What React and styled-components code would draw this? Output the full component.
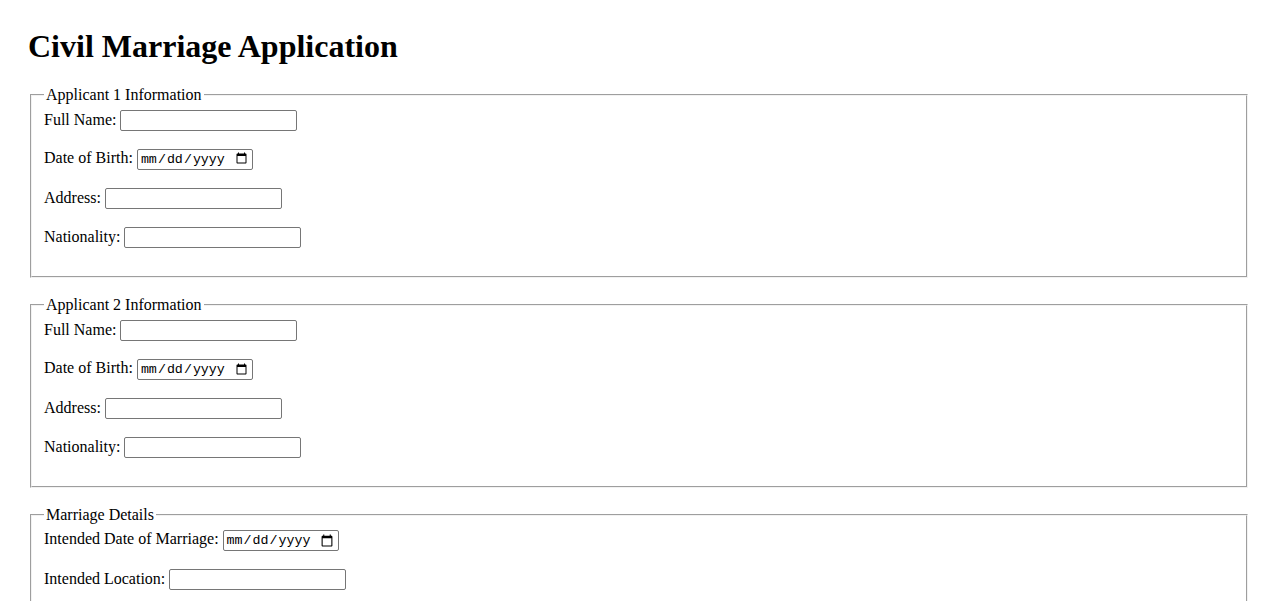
import React from "react";
import styled, { createGlobalStyle } from "styled-components";

const GlobalStyle = createGlobalStyle`
	body {
		margin: 0;
		background: #ffffff;
		color: #000000;
		font-family: "Liberation Serif", "Times New Roman", serif;
		font-size: 16px;
	}
`;

const Page = styled.div`
	padding: 28px;
`;

const Title = styled.h1`
	font-size: 32px;
	font-weight: bold;
	margin: 0 0 21px;
`;

const Section = styled.fieldset`
	margin: 0 2px 18.5px;
	padding: 0.35em 0.75em 0.625em;
	border: 2px groove rgb(242, 242, 242);
`;

const Legend = styled.legend`
	padding: 0 2px;
`;

const Row = styled.div`
	min-height: 24px;
	margin-bottom: 15px;
`;

const Input = styled.input`
	font-family: "Liberation Sans", Arial, sans-serif;
	font-size: 13.333px;
	padding: 1px 2px;
	border: 1px solid #767676;
	border-radius: 2px;
	width: 171px;
	height: 17px;
	box-sizing: content-box;

	&[type="date"] {
		font-family: "Liberation Mono", "DejaVu Sans Mono", monospace;
		width: 110px;
	}
`;

const Field = ({ label, type = "text" }) => (
	<Row>
		<label>
			{label}: <Input type={type} />
		</label>
	</Row>
);

const applicants = ["Applicant 1 Information", "Applicant 2 Information"];

export default function App() {
	return (
		<Page>
			<GlobalStyle />
			<Title>Civil Marriage Application</Title>
			{applicants.map((title) => (
				<Section key={title}>
					<Legend>{title}</Legend>
					<Field label="Full Name" />
					<Field label="Date of Birth" type="date" />
					<Field label="Address" />
					<Field label="Nationality" />
				</Section>
			))}
			<Section>
				<Legend>Marriage Details</Legend>
				<Field label="Intended Date of Marriage" type="date" />
				<Field label="Intended Location" />
			</Section>
		</Page>
	);
}
